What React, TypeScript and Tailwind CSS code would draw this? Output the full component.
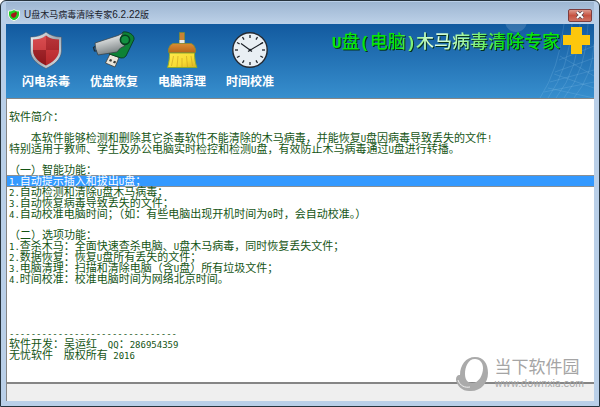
import type { ReactNode } from "react";

const introLines = ["    本软件能够检测和删除其它杀毒软件不能清除的木马病毒，并能恢复U盘因病毒导致丢失的文件!", "特别适用于教师、学生及办公电脑实时检控和检测U盘，有效防止木马病毒通过U盘进行转播。"];

type Block = { lines: string[]; selected?: number };

const blocks: Block[] = [
  { lines: ["软件简介："] },
  { lines: introLines },
  {
    lines: [
      "（一）智能功能：",
      "1.自动提示插入和拔出U盘；",
      "2.自动检测和清除U盘木马病毒；",
      "3.自动恢复病毒导致丢失的文件；",
      "4.自动校准电脑时间；（如：有些电脑出现开机时间为0时，会自动校准。）",
    ],
    selected: 1,
  },
  {
    lines: [
      "（二）选项功能：",
      "1.查杀木马：全面快速查杀电脑、U盘木马病毒，同时恢复丢失文件；",
      "2.数据恢复：恢复U盘所有丢失的文件；",
      "3.电脑清理：扫描和清除电脑（含U盘）所有垃圾文件；",
      "4.时间校准：校准电脑时间为网络北京时间。",
    ],
  },
];

const credits: Block = {
  lines: ["-------------------------------", "软件开发：吴运红  QQ：286954359", "无忧软件  版权所有 2016"],
};

/* Half-width characters are set in a smaller monospace face, two to one full-width cell. */
function GridText({ text }: { text: string }) {
  return (
    <>
      {text.split(/([\x20-\x7e]+)/).map((part, i) =>
        i % 2 ? (
          <span key={i} className="font-['DejaVu_Sans_Mono',monospace] text-[9px]">
            {part}
          </span>
        ) : (
          part
        ),
      )}
    </>
  );
}

function TextBlock({ lines, selected }: Block) {
  return (
    <ul>
      {lines.map((line, i) => (
        <li
          key={line}
          className={
            i === selected
              ? "h-[11px] bg-[#3399ff] pl-[2px] text-white shadow-[inset_0_1px_0_#8a8f94,0_1px_0_#8a8f94]"
              : "h-[11px] pl-[2px]"
          }
        >
          <GridText text={line} />
        </li>
      ))}
    </ul>
  );
}

function ShieldIcon() {
  return (
    <svg viewBox="0 0 40 40" className="size-10">
      <defs>
        <linearGradient id="shieldRim" x1="0" y1="0" x2="1" y2="1">
          <stop offset="0" stopColor="#f4f6f8" />
          <stop offset="0.5" stopColor="#9fa8b0" />
          <stop offset="1" stopColor="#dfe5ea" />
        </linearGradient>
        <linearGradient id="shieldShade" x1="0" y1="0" x2="0" y2="1">
          <stop offset="0" stopColor="#fff" stopOpacity="0.15" />
          <stop offset="1" stopColor="#000" stopOpacity="0.15" />
        </linearGradient>
        <clipPath id="shieldFace">
          <path d="M20 5.5C16.500 8.500 11.500 9.500 7 9.500V21C7.500 28 14 32.500 20 35.500 26 32.500 32.500 28 33 21V9.500C28.500 9.500 23.500 8.500 20 5.500Z" />
        </clipPath>
      </defs>
      <path
        d="M20 2C16 5.500 10 7 4.500 7V21C5 30 12.500 35 20 38.500 27.500 35 35 30 35.500 21V7C30 7 24 5.500 20 2Z"
        fill="url(#shieldRim)"
        stroke="#46566a"
        strokeWidth="0.6"
      />
      <g clipPath="url(#shieldFace)">
        <path d="M0 0H20V20H0Z" fill="#d93438" />
        <path d="M20 0H40V20H20Z" fill="#b3191f" />
        <path d="M0 20H20V40H0Z" fill="#a3141a" />
        <path d="M20 20H40V40H20Z" fill="#cf282c" />
        <path d="M0 0H40V40H0Z" fill="url(#shieldShade)" />
      </g>
    </svg>
  );
}

function UsbIcon() {
  return (
    <svg viewBox="0 0 44 40" className="h-10 w-11">
      <defs>
        <linearGradient id="usbMetal" x1="0" y1="0" x2="0.3" y2="1">
          <stop offset="0" stopColor="#8f9698" />
          <stop offset="0.35" stopColor="#d9dcdc" />
          <stop offset="1" stopColor="#7c8385" />
        </linearGradient>
      </defs>
      <path d="M18 24L27 27.500 23 37 13.500 33Z" fill="#ece7dc" stroke="#3d3c38" strokeWidth="0.8" />
      <path d="M18 29l2.200 .8-1 2-2.200-.8zM22 30.800l2.200 .8-1 2-2.200-.8z" fill="#393a36" />
      <path d="M31 2C36 1 43 5 42 9.500L34 26Q32 28.500 29 28L17 24 22 14Z" fill="#0e8236" stroke="#06351b" strokeWidth="0.8" />
      <path
        d="M3 13L26 5.500 31 3Q28 7 29 11 29.500 14 33 16 28 17 25 22L6 25Q3 19 3 13Z"
        fill="url(#usbMetal)"
        stroke="#3b4549"
        strokeWidth="0.8"
      />
      <circle cx="33" cy="9.800" r="4.600" fill="#129040" stroke="#06401f" strokeWidth="1.6" />
      <path d="M3 16.500L1.500 17.500 2.500 21 4.500 21" stroke="#1e2a33" fill="none" strokeWidth="1.200" />
    </svg>
  );
}

function BroomIcon() {
  return (
    <svg viewBox="0 0 36 40" className="h-10 w-9">
      <defs>
        <linearGradient id="broomWood" x1="0" y1="0" x2="0" y2="1">
          <stop offset="0" stopColor="#d98d35" />
          <stop offset="1" stopColor="#b9651b" />
        </linearGradient>
        <linearGradient id="broomStraw" x1="0" y1="0" x2="1" y2="1">
          <stop offset="0" stopColor="#ffe94d" />
          <stop offset="0.6" stopColor="#f7db32" />
          <stop offset="1" stopColor="#d9b020" />
        </linearGradient>
      </defs>
      <path d="M15.500 2.500H20.500V13H15.500Z" fill="#c98233" stroke="#7a8a35" strokeWidth="0.8" />
      <path d="M15.500 10H20.500V13.500H15.500Z" fill="#e6eaec" />
      <path d="M5.500 23H30.500C30.500 29 31.500 34 33 37.500H3.500C5 33 5.500 28 5.500 23Z" fill="url(#broomStraw)" stroke="#8eaa2c" />
      <path d="M9.500 26L7.500 36M14 26L13 37M18 28V37M22.500 26L23.500 37M27 26L28.500 36" stroke="#cfa622" strokeWidth="0.7" />
      <path d="M9 13.500H27Q30 14 31.500 19V22.500H4.500V19Q6 14 9 13.500Z" fill="url(#broomWood)" stroke="#8b8a2c" strokeWidth="0.8" />
    </svg>
  );
}

const clockTicks = [0, 30, 60, 90, 120, 150, 180, 210, 240, 270, 300, 330];

function ClockIcon() {
  return (
    <svg viewBox="0 0 38 38" className="size-[38px]">
      <circle cx="19" cy="19" r="17.2" fill="#e9eff4" stroke="#252a32" strokeWidth="1.4" />
      {clockTicks.map((angle) => (
        <path key={angle} d="M19 4V7" stroke="#1f242b" strokeWidth="1.3" transform={`rotate(${angle} 19 19)`} />
      ))}
      <path d="M10 12.500L21 20.500M17 20.500L32 11.500" stroke="#1b2027" strokeWidth="1.1" fill="none" />
      <circle cx="19" cy="19" r="1.200" fill="#1b2027" />
    </svg>
  );
}

function ToolButton({ label, children }: { label: string; children: ReactNode }) {
  return (
    <button type="button" className="flex w-[68px] flex-col items-center gap-[2px]">
      <span className="flex h-10 items-center justify-center">{children}</span>
      <span className="text-[12px] leading-[20px] font-bold whitespace-nowrap text-white">{label}</span>
    </button>
  );
}

function TitleBar() {
  return (
    <header className="flex h-[22px] items-center bg-linear-to-b from-[#9db6d2] to-[#bdd1e8] pt-1 pr-[2px] pl-[2px]">
      <svg viewBox="0 0 12 12" className="size-3">
        <path d="M6 0.500C4 2 2 2 0.500 2V6C1 9 3.500 11 6 11.700 8.500 11 11 9 11.500 6V2C10 2 8 2 6 0.500Z" fill="#1fcf25" stroke="#f0f8f0" />
        <path d="M3 7C3 4 5 4 6 4L8 2.500 9 4.500 7.500 8 5 9Z" fill="#a3161a" />
      </svg>
      <h1 className="ml-1 grow text-[9px] leading-4 text-[#18202a]">
        <span className="text-[10px]">U</span>盘木马病毒清除专家<span className="text-[10px]">6.2.22</span>版
      </h1>
      <button
        type="button"
        aria-label="关闭"
        className="flex h-[13px] w-6 items-center justify-center rounded-[2px] border border-[#7c3c3e] bg-linear-to-b from-[#dc9a8e] via-[#c65241] to-[#cf7464]"
      >
        <svg viewBox="0 0 10 8" className="h-2 w-2.5">
          <path d="M2 1L8 7M8 1L2 7" stroke="#59444b" strokeWidth="3.400" />
          <path d="M2 1L8 7M8 1L2 7" stroke="#fff" strokeWidth="2" />
        </svg>
      </button>
    </header>
  );
}

function Toolbar() {
  return (
    <div className="relative flex h-[74px] items-start bg-linear-to-b from-[#125a9f] to-[#378fce]">
      <svg viewBox="0 0 100 74" className="absolute top-0 right-0 h-[74px] w-[100px]">
        <circle cx="22" cy="-3" r="11" fill="#fff" opacity="0.14" />
        <path
          d="M46 74Q65 45 70 0M54 74Q75 45 78 0M62 74Q85 45 86 0M70 74Q93 45 94 0M80 74Q99 50 100 20M50 68L100 58M56 58L100 46M61 48L100 34M65 36L100 22M54 64L100 74M60 50L100 64M66 32L100 52"
          stroke="#9ed0f4"
          strokeWidth="0.6"
          opacity="0.3"
          fill="none"
        />
      </svg>
      <nav aria-label="工具" className="flex pt-[6px] pl-[6px]">
        <ToolButton label="闪电杀毒">
          <ShieldIcon />
        </ToolButton>
        <ToolButton label="优盘恢复">
          <UsbIcon />
        </ToolButton>
        <ToolButton label="电脑清理">
          <BroomIcon />
        </ToolButton>
        <ToolButton label="时间校准">
          <ClockIcon />
        </ToolButton>
      </nav>
      <div className="relative ml-auto flex items-start gap-[3px] pr-[4px]">
        <p className="mt-[6px] bg-linear-to-r from-[#08e70d] from-30% via-[#e4ffe4] via-45% to-[#08e70d] to-75% bg-clip-text text-[18px] leading-6 font-medium whitespace-nowrap text-transparent drop-shadow-[1px_1px_0_#06331d]">
          <span className="font-['Liberation_Mono',monospace] text-[17px] font-bold">U</span>盘
          <span className="font-['Liberation_Mono',monospace] text-[17px] font-bold">(</span>电脑
          <span className="font-['Liberation_Mono',monospace] text-[17px] font-bold">)</span>木马病毒清除专家
        </p>
        <svg viewBox="0 0 27 27" className="mt-[3px] size-[27px]">
          <path d="M8 0H19V8H27V18H19V27H8V18H0V8H8Z" fill="#fdc70c" />
        </svg>
      </div>
    </div>
  );
}

function Watermark() {
  return (
    <div className="absolute right-[15px] bottom-[14px] flex items-center gap-[6px] text-[#a5a5a5]">
      <svg viewBox="0 0 32 35" className="h-[35px] w-8">
        <path
          fillRule="evenodd"
          d="M19 0C28 0 32 7 32 16 32 26 25 34 15 34 7 35 1 29 0 23 0 20 1 18 4 18 4 8 10 0 19 0ZM19 2C12 2 9 10 9 17 9 23 12 26 16 26 23 26 27 18 27 11 27 6 24 2 19 2Z"
          fill="#aaaaaa"
        />
        <path d="M2 23C4 29 9 31 14 30" stroke="#eee" fill="none" strokeWidth="1" />
      </svg>
      <div>
        <p className="text-[17px] leading-[18px]">当下软件园</p>
        <p className="font-[Inter,sans-serif] text-[10px] leading-[13px]">www.downxia.com</p>
      </div>
    </div>
  );
}

export default function App() {
  return (
    <div className="relative flex min-h-screen flex-col rounded-t-[6px] border border-[#26333d] bg-[#b9cfe8] px-[5px] pt-px pb-[5px] font-['Liberation_Sans','Noto_Sans_CJK_SC',sans-serif]">
      <TitleBar />
      <Toolbar />
      <main className="grow border-t border-l border-[#858585] bg-white pt-[12px] text-[11px] leading-[13px] whitespace-pre text-[#145414]">
        <div className="flex flex-col gap-[10px]">
          {blocks.map((block) => (
            <TextBlock key={block.lines[0]} {...block} />
          ))}
        </div>
        <div className="mt-[43px]">
          <TextBlock {...credits} />
        </div>
      </main>
      <footer className="h-[19px] border-t-2 border-l border-[#858585] bg-[#efefef]" />
      <Watermark />
    </div>
  );
}
